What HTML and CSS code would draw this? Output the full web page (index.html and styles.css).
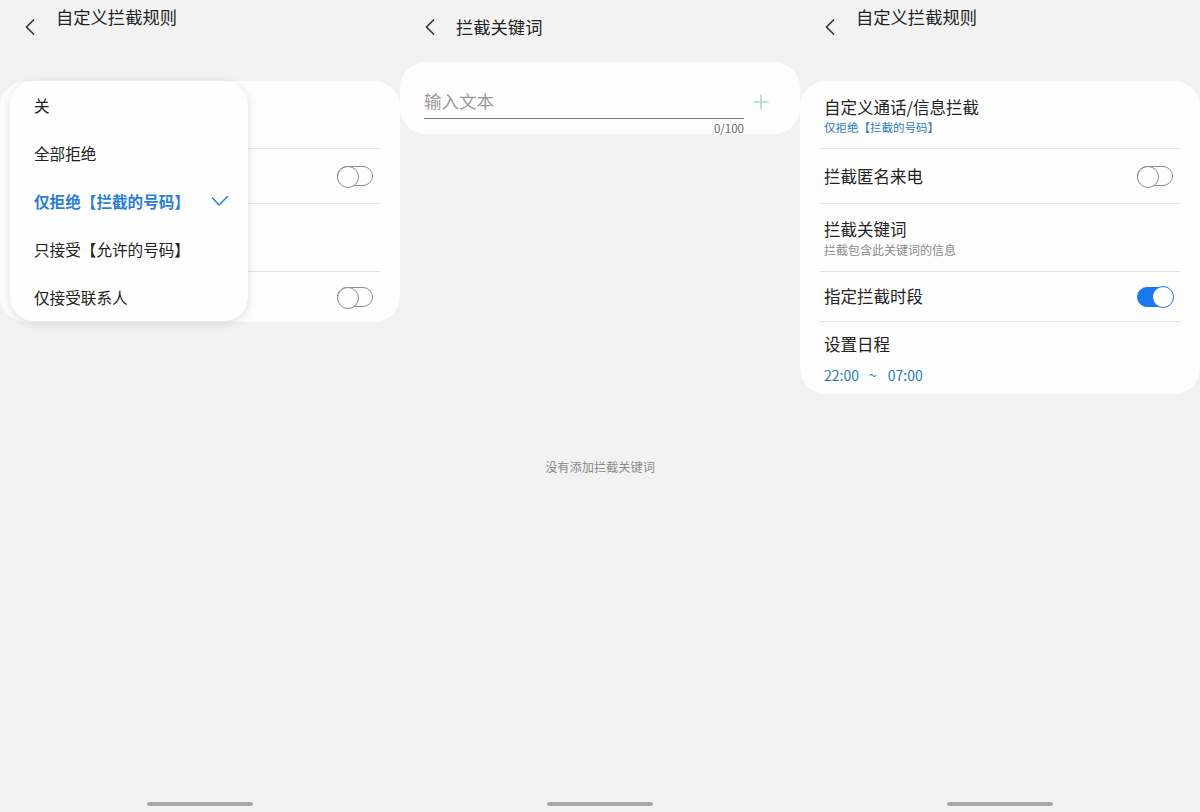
FILE: index.html
```html
<!DOCTYPE html>
<html lang="zh-CN">
<head>
  <meta charset="UTF-8">
  <title>自定义拦截规则</title>
  <link rel="stylesheet" href="styles.css">
</head>
<body>
  <div class="screens">

    <!-- 屏幕 1：下拉菜单 -->
    <section class="screen">
      <header class="topbar">
        <span class="back">
          <svg width="12" height="18" viewBox="0 0 12 18"><polyline points="10,1.5 2.5,9 10,16.5" fill="none" stroke="#333" stroke-width="1.6"/></svg>
        </span>
        <h1 class="title raised">自定义拦截规则</h1>
      </header>

      <div class="card-wrap">
        <div class="card">
          <div class="row row-first">
            <div class="row-text">
              <div class="row-title">自定义通话/信息拦截</div>
              <div class="row-sub blue">仅拒绝【拦截的号码】</div>
            </div>
          </div>
          <div class="row row-single">
            <div class="row-title">拦截匿名来电</div>
            <span class="toggle"></span>
          </div>
          <div class="row row-double">
            <div class="row-text">
              <div class="row-title">拦截关键词</div>
              <div class="row-sub">拦截包含此关键词的信息</div>
            </div>
          </div>
          <div class="row row-short last">
            <div class="row-title">指定拦截时段</div>
            <span class="toggle"></span>
          </div>
        </div>

        <ul class="menu">
          <li class="menu-item">关</li>
          <li class="menu-item">全部拒绝</li>
          <li class="menu-item selected">
            仅拒绝【拦截的号码】
            <svg class="check" width="18" height="12" viewBox="0 0 18 12"><polyline points="1,2.5 8,10 17,1" fill="none" stroke="#2a7ed6" stroke-width="1.5"/></svg>
          </li>
          <li class="menu-item">只接受【允许的号码】</li>
          <li class="menu-item">仅接受联系人</li>
        </ul>
      </div>

      <div class="home-bar"></div>
    </section>

    <!-- 屏幕 2：拦截关键词 -->
    <section class="screen">
      <header class="topbar short">
        <span class="back">
          <svg width="12" height="18" viewBox="0 0 12 18"><polyline points="10,1.5 2.5,9 10,16.5" fill="none" stroke="#333" stroke-width="1.6"/></svg>
        </span>
        <h1 class="title">拦截关键词</h1>
      </header>

      <div class="card input-card">
        <div class="input-box">
          <div class="input-line">输入文本</div>
          <div class="counter">0/100</div>
        </div>
        <span class="plus">
          <svg width="16" height="16" viewBox="0 0 16 16"><path d="M8 0.5V15.5M0.5 8H15.5" stroke="#a9dcc2" stroke-width="1.6" fill="none"/></svg>
        </span>
      </div>

      <p class="empty">没有添加拦截关键词</p>

      <div class="home-bar"></div>
    </section>

    <!-- 屏幕 3：规则列表 -->
    <section class="screen">
      <header class="topbar">
        <span class="back">
          <svg width="12" height="18" viewBox="0 0 12 18"><polyline points="10,1.5 2.5,9 10,16.5" fill="none" stroke="#333" stroke-width="1.6"/></svg>
        </span>
        <h1 class="title raised">自定义拦截规则</h1>
      </header>

      <div class="card">
        <div class="row row-first">
          <div class="row-text">
            <div class="row-title">自定义通话/信息拦截</div>
            <div class="row-sub blue">仅拒绝【拦截的号码】</div>
          </div>
        </div>
        <div class="row row-single">
          <div class="row-title">拦截匿名来电</div>
          <span class="toggle"></span>
        </div>
        <div class="row row-double">
          <div class="row-text">
            <div class="row-title">拦截关键词</div>
            <div class="row-sub">拦截包含此关键词的信息</div>
          </div>
        </div>
        <div class="row row-short">
          <div class="row-title">指定拦截时段</div>
          <span class="toggle on"></span>
        </div>
        <div class="row row-schedule last">
          <div class="row-text">
            <div class="row-title">设置日程</div>
            <div class="row-time">22:00<span class="tilde">~</span>07:00</div>
          </div>
        </div>
      </div>

      <div class="home-bar"></div>
    </section>

  </div>
</body>
</html>
```

FILE: styles.css
```css
* {
  margin: 0;
  padding: 0;
  box-sizing: border-box;
}

body {
  font-family: "Noto Sans CJK SC", "Noto Sans", sans-serif;
  background-color: #f2f2f2;
  color: #222;
}

.screens {
  display: flex;
  width: 1200px;
  height: 812px;
}

.screen {
  width: 400px;
  height: 812px;
  display: flex;
  flex-direction: column;
}

/* 顶部栏 */
.topbar {
  height: 81px;
  display: flex;
  align-items: flex-start;
  padding-left: 24px;
}

.topbar.short {
  height: 62px;
}

.back {
  display: flex;
  margin-top: 18px;
  width: 32px;
}

.title {
  font-size: 17.3px;
  font-weight: 400;
  line-height: 22px;
  margin-top: 16px;
  color: #222;
}

.title.raised {
  margin-top: 6px;
}

/* 卡片 */
.card-wrap {
  position: relative;
}

.card {
  background: #fdfdfd;
  border-radius: 26px;
  padding: 0 20px;
}

.row {
  display: flex;
  align-items: center;
  justify-content: space-between;
  padding: 0 4px;
  border-bottom: 1px solid #e5e5e5;
}

.row.last {
  border-bottom: none;
}

.row-first {
  padding-top: 15px;
  padding-bottom: 12px;
}

.row-single {
  height: 55px;
}

.row-double {
  padding-top: 14px;
  padding-bottom: 13px;
}

.row-short {
  height: 50px;
}

.row-schedule {
  padding-top: 11px;
  padding-bottom: 9px;
}

.row-title {
  font-size: 16.5px;
  line-height: 23px;
  color: #222;
}

.row-sub {
  font-size: 12px;
  line-height: 17px;
  color: #8a8a8a;
}

.row-sub.blue {
  font-size: 11.5px;
  color: #2a7cc8;
}

.row-time {
  font-size: 14px;
  line-height: 19px;
  margin-top: 10px;
  color: #2a7cc8;
}

.tilde {
  margin: 0 11px 0 10px;
}

/* 开关 */
.toggle {
  position: relative;
  width: 36px;
  height: 20px;
  border: 1.5px solid #8c8c8c;
  border-radius: 10px;
  margin-right: 3px;
}

.toggle::after {
  content: "";
  position: absolute;
  top: -1.5px;
  left: -1.5px;
  width: 20px;
  height: 20px;
  border: 1.5px solid #8c8c8c;
  border-radius: 50%;
  background: #fdfdfd;
}

.toggle.on {
  background: #1a78ee;
  border-color: #1a78ee;
}

.toggle.on::after {
  left: auto;
  right: -1.5px;
  border-color: #1a78ee;
  background: #fff;
}

/* 下拉菜单 */
.menu {
  position: absolute;
  top: 0;
  left: 10px;
  width: 238px;
  list-style: none;
  background: #fefefe;
  border-radius: 24px;
  box-shadow: 0 2px 10px rgba(0, 0, 0, 0.12);
}

.menu-item {
  height: 48px;
  display: flex;
  align-items: center;
  justify-content: space-between;
  padding: 0 19px 0 24px;
  font-size: 15.6px;
  color: #222;
}

.menu-item.selected {
  color: #2a7ed6;
  font-weight: 600;
}

/* 输入卡片 */
.input-card {
  height: 72px;
  display: flex;
  align-items: flex-start;
  padding: 27px 31px 0 24px;
}

.input-box {
  width: 321px;
}

.input-line {
  font-size: 17.5px;
  line-height: 23px;
  color: #9a9a9a;
  padding-bottom: 6px;
  border-bottom: 1px solid #7a7a7a;
}

.counter {
  font-size: 11.5px;
  line-height: 16px;
  margin-top: 1px;
  text-align: right;
  color: #666;
}

.plus {
  display: flex;
  margin: 5px 0 0 9px;
}

.empty {
  margin-top: 325px;
  text-align: center;
  font-size: 12.2px;
  line-height: 16px;
  color: #8a8a8a;
}

.home-bar {
  margin: auto auto 6px;
  width: 106px;
  height: 4px;
  border-radius: 2px;
  background: #a9a9a9;
}
```
